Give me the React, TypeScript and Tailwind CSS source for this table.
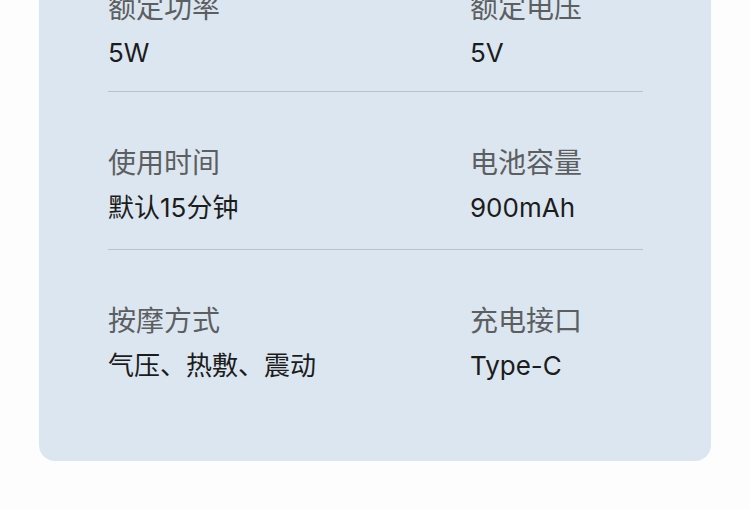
const specs = [
  [
    { label: "额定功率", value: "5W" },
    { label: "额定电压", value: "5V" },
  ],
  [
    { label: "使用时间", value: "默认15分钟" },
    { label: "电池容量", value: "900mAh" },
  ],
  [
    { label: "按摩方式", value: "气压、热敷、震动" },
    { label: "充电接口", value: "Type-C" },
  ],
];

const SpecCell = ({ label, value }: { label: string; value: string }) => (
  <div className="flex flex-col gap-[7px]">
    <span className="text-[28px] leading-[40px] text-[#5c5e61]">{label}</span>
    <span
      className="text-[26px] leading-[40px] text-[#1c1c1c]"
      style={{ fontFamily: 'Inter, "Noto Sans CJK SC", sans-serif' }}
    >
      {value}
    </span>
  </div>
);

const App = () => {
  return (
    <div
      className="h-[509px] w-[750px] overflow-hidden bg-[#fdfdfd] px-[39px]"
      style={{ fontFamily: '"Noto Sans CJK SC", "Noto Sans", sans-serif' }}
    >
      <div className="-mt-[63px] rounded-2xl bg-[#dce6f0] pl-[69px] pr-[68px] pb-[75px]">
        {specs.map((row, i) => (
          <div
            key={i}
            className={`grid grid-cols-[362px_1fr] pt-[49px] ${
              i === 0
                ? "border-b border-[#b9c1c9] pb-[18px]"
                : i < specs.length - 1
                  ? "border-b border-[#b9c1c9] pb-[21px]"
                  : ""
            }`}
          >
            {row.map((cell) => (
              <SpecCell key={cell.label} label={cell.label} value={cell.value} />
            ))}
          </div>
        ))}
      </div>
    </div>
  );
};

export default App;
